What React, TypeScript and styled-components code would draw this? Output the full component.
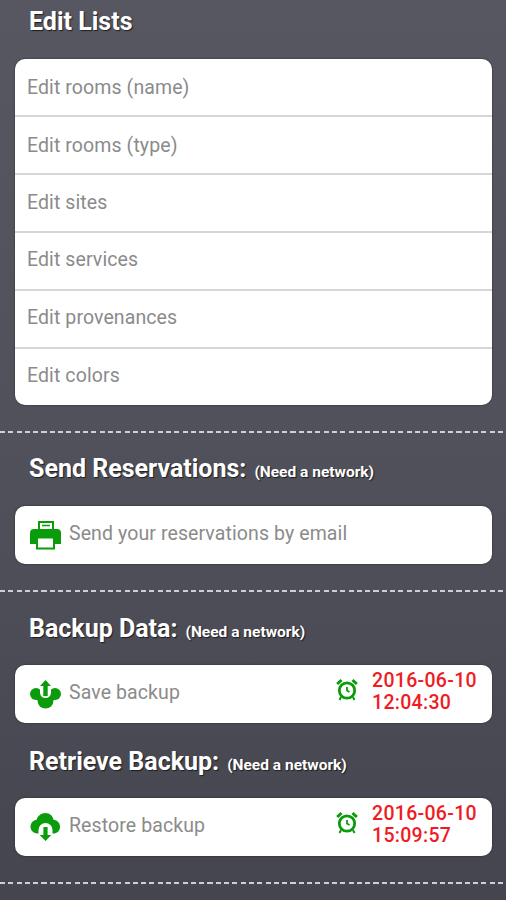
import { createGlobalStyle, styled } from "styled-components";

const GlobalStyle = createGlobalStyle`
  html, body {
    margin: 0;
    padding: 0;
    background: #4b4b55;
  }
`;

const Page = styled.div`
  width: 506px;
  height: 900px;
  overflow: hidden;
  background: linear-gradient(180deg, #575761 0%, #50505a 55%, #45454f 100%);
  font-family: Roboto, "Liberation Sans", sans-serif;
`;

const Section = styled.section<{ $top: number }>`
  padding: ${(p) => p.$top}px 14px 26px 15px;
`;

const Divider = styled.div`
  height: 2px;
  background: repeating-linear-gradient(90deg, #cfcfd3 0 5px, transparent 5px 8.3px);
`;

const LastGroup = styled.div`
  margin-top: 24px;
`;

const Heading = styled.h2<{ $gap: number }>`
  margin: 0 0 ${(p) => p.$gap}px 14px;
  height: 30px;
  line-height: 30px;
  font-size: 25px;
  font-weight: 700;
  color: #fff;
  text-shadow: 1px 1px 1px #1d1d22;
  white-space: nowrap;
`;

const Hint = styled.small`
  margin-left: 8px;
  font-size: 15.5px;
  font-weight: 700;
`;

const Card = styled.div`
  background: #fff;
  border-radius: 10px;
  box-shadow: 0 0 2px rgba(20, 20, 25, 0.7);
  overflow: hidden;
`;

const ListRow = styled.div`
  box-sizing: border-box;
  height: 58px;
  padding-left: 12px;
  display: flex;
  align-items: center;
  font-size: 19.5px;
  letter-spacing: 0.1px;
  color: #8b8b8b;
  border-bottom: 2px solid #d6d6d6;

  &:nth-child(3) {
    padding-bottom: 2px;
  }

  &:nth-child(n + 4) {
    padding-bottom: 4px;
  }

  &:last-child {
    height: 56px;
    border-bottom: 0;
  }
`;

const ActionRow = styled.div`
  height: 58px;
  padding-left: 15px;
  display: flex;
  align-items: center;
  font-size: 19.5px;
  letter-spacing: 0.1px;
  color: #8b8b8b;
`;

const ActionLabel = styled.span`
  margin-left: 8px;
  padding-bottom: 3px;
  flex: 1;
`;

const AlarmSvg = styled.svg`
  margin-bottom: 8px;
`;

const Stamp = styled.div`
  width: 105px;
  margin-left: 14px;
  margin-right: 15px;
  padding-bottom: 5px;
  font-size: 19.5px;
  font-weight: 500;
  line-height: 22px;
  letter-spacing: 0.3px;
  color: #ef1c24;
`;

const ICON_GREEN = "#0a9c0a";

function PrinterIcon() {
  return (
    <svg width="31" height="30" viewBox="0 0 31 30" fill="none">
      <path d="M9 2h14v9H9z" stroke={ICON_GREEN} strokeWidth="2" />
      <path d="M12 5.500h8" stroke={ICON_GREEN} strokeWidth="1.500" />
      <path d="M4 9h23a4 4 0 0 1 4 4v11H0V13a4 4 0 0 1 4-4z" fill={ICON_GREEN} />
      <path d="M7 17.500h17v11H7z" fill="#fff" stroke={ICON_GREEN} strokeWidth="2" />
    </svg>
  );
}

function SaveIcon() {
  return (
    <svg width="31" height="30" viewBox="0 0 31 30">
      <circle cx="6" cy="15" r="6" fill={ICON_GREEN} />
      <circle cx="25" cy="15" r="6" fill={ICON_GREEN} />
      <circle cx="15.500" cy="21.500" r="8" fill={ICON_GREEN} />
      <path d="M6 17h19v4H6z" fill={ICON_GREEN} />
      <path d="M10 8v5.500a5.500 5.500 0 0 0 11 0V8z" fill="#fff" />
      <path d="M15.500 1l5.500 6h-3.300v10h-4.400V7H10z" fill={ICON_GREEN} />
    </svg>
  );
}

function RestoreIcon() {
  return (
    <svg width="31" height="30" viewBox="0 0 31 30">
      <path
        d="M15.500 1c4 0 7.300 2.800 8 6.700 3.700.3 6.500 3.200 6.500 7 0 4-3 6.800-6.700 6.800H7.500C3.600 21.500.500 18.700.500 14.800c0-3.700 2.700-6.500 6.100-7C7.600 3.900 11.300 1 15.500 1z"
        fill={ICON_GREEN}
      />
      <path d="M8.500 22v-4a7 7 0 0 1 14 0v4z" fill="#fff" />
      <path d="M13.400 15h4.200v8h3.700l-5.800 6-5.800-6h3.700z" fill={ICON_GREEN} />
    </svg>
  );
}

function AlarmIcon() {
  return (
    <AlarmSvg width="22" height="24" viewBox="0 0 22 24" fill="none" stroke={ICON_GREEN}>
      <circle cx="11" cy="12.500" r="7.700" strokeWidth="2.800" />
      <path d="M11 9v3.500l2.500 1.500" strokeWidth="1.800" />
      <path d="M1.200 6 5.500 2M20.800 6l-4.300-4" strokeWidth="3" />
      <path d="M5 19 3.500 22M17 19l1.500 3" strokeWidth="2" />
    </AlarmSvg>
  );
}

const LIST_ITEMS = [
  "Edit rooms (name)",
  "Edit rooms (type)",
  "Edit sites",
  "Edit services",
  "Edit provenances",
  "Edit colors",
];

export default function App() {
  return (
    <Page>
      <GlobalStyle />
      <Section $top={7}>
        <Heading $gap={22}>Edit Lists</Heading>
        <Card>
          {LIST_ITEMS.map((item) => (
            <ListRow key={item}>{item}</ListRow>
          ))}
        </Card>
      </Section>
      <Divider />
      <Section $top={21}>
        <Heading $gap={22}>
          Send Reservations:<Hint>(Need a network)</Hint>
        </Heading>
        <Card>
          <ActionRow>
            <PrinterIcon />
            <ActionLabel>Send your reservations by email</ActionLabel>
          </ActionRow>
        </Card>
      </Section>
      <Divider />
      <Section $top={22}>
        <Heading $gap={21}>
          Backup Data:<Hint>(Need a network)</Hint>
        </Heading>
        <Card>
          <ActionRow>
            <SaveIcon />
            <ActionLabel>Save backup</ActionLabel>
            <AlarmIcon />
            <Stamp>
              2016-06-10
              <br />
              12:04:30
            </Stamp>
          </ActionRow>
        </Card>
        <LastGroup>
          <Heading $gap={21}>
            Retrieve Backup:<Hint>(Need a network)</Hint>
          </Heading>
          <Card>
            <ActionRow>
              <RestoreIcon />
              <ActionLabel>Restore backup</ActionLabel>
              <AlarmIcon />
              <Stamp>
                2016-06-10
                <br />
                15:09:57
              </Stamp>
            </ActionRow>
          </Card>
        </LastGroup>
      </Section>
      <Divider />
    </Page>
  );
}
